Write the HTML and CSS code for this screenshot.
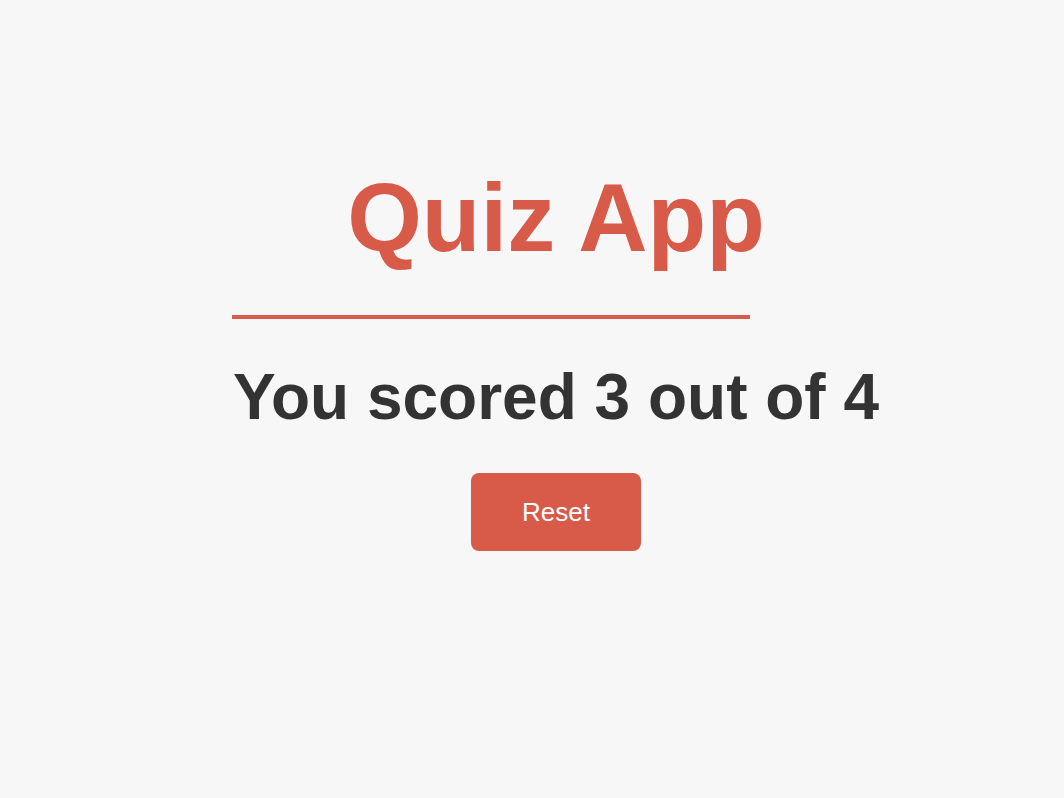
FILE: index.html
```html
<!DOCTYPE html>
<html lang="en">
<head>
<meta charset="utf-8">
<title>Quiz App</title>
<link rel="stylesheet" href="styles.css">
</head>
<body>
<main class="quiz">
  <h1 class="quiz-title">Quiz App</h1>
  <hr class="quiz-rule">
  <h2 class="quiz-score">You scored 3 out of 4</h2>
  <button class="quiz-reset" type="button">Reset</button>
</main>
</body>
</html>
```
FILE: styles.css
```css
html, body {
  margin: 0;
  padding: 0;
  background: #f7f7f7;
}
body {
  font-family: "Liberation Sans", Arial, Helvetica, sans-serif;
  min-height: 798px;
}
.quiz {
  width: 648px;
  margin-left: 232px;
  padding-top: 163px;
  text-align: center;
}
.quiz-title {
  margin: 0 0 42px;
  font-size: 96px;
  font-weight: 700;
  color: #d85a49;
}
.quiz-rule {
  width: 518px;
  height: 4px;
  margin: 0 0 41px;
  border: 0;
  background: #d85a49;
}
.quiz-score {
  margin: 0 0 39px;
  font-size: 64px;
  font-weight: 700;
  color: #333333;
}
.quiz-reset {
  font-family: inherit;
  font-size: 26px;
  line-height: 30px;
  padding: 24px 51px;
  border: 0;
  border-radius: 8px;
  background: #d85a49;
  color: #ffffff;
  cursor: pointer;
}
```
